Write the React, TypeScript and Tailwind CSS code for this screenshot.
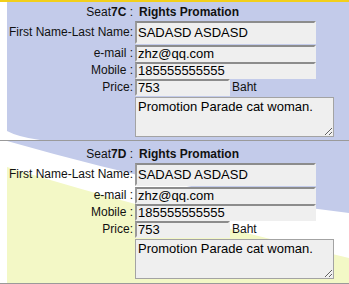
import React from "react";

type Seat = {
  seat: string;
  rights: string;
  name: string;
  email: string;
  mobile: string;
  price: string;
  note: string;
};

const seats: Seat[] = [
  {
    seat: "7C",
    rights: "Rights Promation",
    name: "SADASD ASDASD",
    email: "zhz@qq.com",
    mobile: "185555555555",
    price: "753",
    note: "Promotion Parade cat woman.",
  },
  {
    seat: "7D",
    rights: "Rights Promation",
    name: "SADASD ASDASD",
    email: "zhz@qq.com",
    mobile: "185555555555",
    price: "753",
    note: "Promotion Parade cat woman.",
  },
];

const inputCls =
  "block h-full bg-[#efefef] border-2 border-t-[#8c8c8c] border-l-[#9a9a9a] border-b-[#efefef] border-r-[#efefef] pl-[1px] text-[13px] leading-[15px] text-black outline-none";

function TopBg() {
  return (
    <svg className="absolute inset-0 w-full h-full" viewBox="0 0 349 138" preserveAspectRatio="none">
      <rect x="0" y="0" width="349" height="138" fill="#ffffff" />
      <rect x="7" y="0" width="342" height="138" fill="#c3cbea" />
      <path d="M7,129 Q18,135 40,138 L7,138 Z" fill="#ffffff" />
    </svg>
  );
}

function BottomBg() {
  return (
    <svg className="absolute inset-0 w-full h-full" viewBox="0 0 349 142" preserveAspectRatio="none">
      <rect x="0" y="0" width="349" height="142" fill="#ffffff" />
      <path d="M7,0 L349,0 L349,72 Q200,55 7,0 Z" fill="#c3cbea" />
      <path d="M7,26 Q150,70 349,117 L349,142 L7,142 Z" fill="#f3f8c6" />
    </svg>
  );
}

function SeatBlock({ s, top }: { s: Seat; top: boolean }) {
  return (
    <div
      className={
        "relative border-b border-[#9a9a9a] " + (top ? "h-[139px] pt-[3px]" : "h-[143px] pt-[6px]")
      }
    >
      {top ? <TopBg /> : <BottomBg />}
      <div className="relative grid grid-cols-[135px_1fr] text-[12px] leading-[15px] text-[#111]">
        <div className="h-[15px] pr-[2px] text-right">
          Seat<b>{s.seat}</b> :
        </div>
        <div className="h-[15px] pl-[4px] font-bold">{s.rights}</div>

        <div className="mt-[1px] h-[23px] pr-[2px] text-right flex items-center justify-end">
          First Name-Last Name:
        </div>
        <div className="mt-[1px] h-[23px]">
          <input readOnly value={s.name} className={inputCls + " w-[181px]"} />
        </div>

        <div className="mt-[1px] h-[17px] pr-[2px] text-right flex items-center justify-end">e-mail :</div>
        <div className="mt-[1px] h-[17px]">
          <input readOnly value={s.email} className={inputCls + " w-[181px]"} />
        </div>

        <div className="h-[17px] pr-[2px] text-right flex items-center justify-end">Mobile :</div>
        <div className="h-[17px]">
          <input readOnly value={s.mobile} className={inputCls + " w-[181px]"} />
        </div>

        <div className="h-[17px] pr-[2px] text-right flex items-center justify-end">Price:</div>
        <div className="h-[17px] flex items-center">
          <input readOnly value={s.price} className={inputCls + " w-[95px]"} />
          <span className="ml-[2px]">Baht</span>
        </div>

        <div />
        <div className="mt-[1px]">
          <textarea
            readOnly
            value={s.note}
            className="block w-[199px] h-[40px] bg-[#efefef] border border-[#a3a3a3] px-[2px] pt-[1px] text-[13px] leading-[15px] text-black outline-none"
          />
        </div>
      </div>
    </div>
  );
}

export default function App() {
  return (
    <div
      className="w-[349px] h-[284px] overflow-hidden bg-white"
      style={{ fontFamily: '"Liberation Sans", Arial, sans-serif' }}
    >
      <div className="h-[2px] bg-[#f2cf1a]" />
      <SeatBlock s={seats[0]} top />
      <SeatBlock s={seats[1]} top={false} />
    </div>
  );
}
